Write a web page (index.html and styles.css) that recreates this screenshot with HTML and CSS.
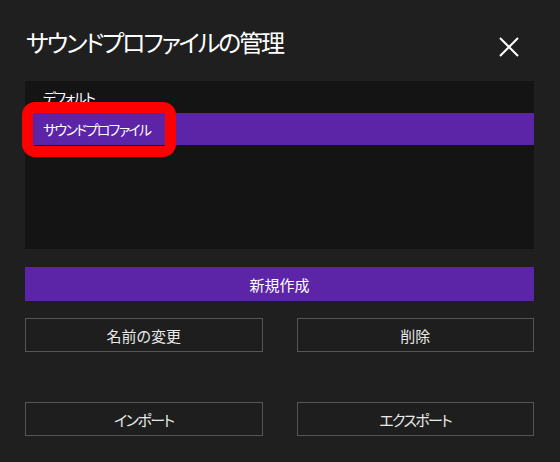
FILE: index.html
```html
<!DOCTYPE html>
<html lang="ja">
<head>
<meta charset="utf-8">
<title>サウンドプロファイルの管理</title>
<link rel="stylesheet" href="styles.css">
</head>
<body>
<div class="dialog">
  <div class="header">
    <h1 class="title">サウンドプロファイルの管理</h1>
    <svg class="close" width="20" height="20" viewBox="0 0 20 20" aria-label="閉じる">
      <path d="M1 1 L19 19 M19 1 L1 19" stroke="#ffffff" stroke-width="2" fill="none"/>
    </svg>
  </div>
  <div class="list">
    <div class="row">デフォルト</div>
    <div class="row selected">サウンドプロファイル</div>
    <div class="mark"></div>
  </div>
  <button class="btn primary">新規作成</button>
  <div class="pair">
    <button class="btn">名前の変更</button>
    <button class="btn">削除</button>
  </div>
  <div class="pair lower">
    <button class="btn kana">インポート</button>
    <button class="btn kana">エクスポート</button>
  </div>
</div>
</body>
</html>
```
FILE: styles.css
```css
html, body {
  margin: 0;
  padding: 0;
  background: #1f1f1f;
}
body {
  font-family: "Noto Sans CJK JP", "Noto Sans", sans-serif;
  font-feature-settings: "palt";
  color: #ffffff;
}
.dialog {
  padding: 26px 26px 0 25px;
  display: flex;
  flex-direction: column;
}
.header {
  display: flex;
  justify-content: space-between;
  align-items: flex-start;
}
.title {
  margin: 0 0 0 1px;
  font-size: 24px;
  font-weight: normal;
  line-height: 32px;
  letter-spacing: -2.1px;
}
.close {
  margin-top: 11px;
  margin-right: 15px;
}
.list {
  position: relative;
  margin-top: 23px;
  height: 168px;
  background: #141414;
}
.row {
  height: 32px;
  line-height: 32px;
  padding-left: 18px;
  font-size: 14px;
  letter-spacing: -1.7px;
}
.row.selected {
  background: #5c24a6;
}
.mark {
  position: absolute;
  left: -3px;
  top: 21px;
  width: 132px;
  height: 33px;
  border: 11px solid #ff0000;
  border-radius: 13px;
}
.btn {
  height: 34px;
  margin: 0;
  padding: 0;
  font-family: inherit;
  font-feature-settings: "palt";
  font-size: 15px;
  color: #e8e8e8;
  background: #1e1e1e;
  border: 1px solid #555555;
}
.btn.kana {
  letter-spacing: -1.6px;
}
.btn.primary {
  margin-top: 18px;
  background: #5c24a6;
  border: none;
  color: #ffffff;
}
.pair {
  margin-top: 17px;
  display: grid;
  grid-template-columns: 1fr 1fr;
  column-gap: 34px;
}
.pair.lower {
  margin-top: 50px;
}
```
